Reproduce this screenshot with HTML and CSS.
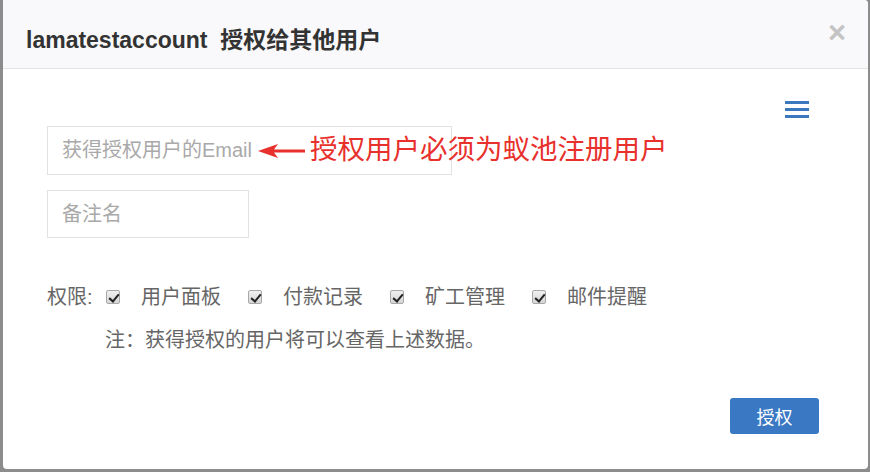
FILE: index.html
```html
<!DOCTYPE html>
<html lang="zh-CN">
<head>
  <meta charset="UTF-8" />
  <meta name="viewport" content="width=device-width, initial-scale=1" />
  <title>授权给其他用户</title>
  <link rel="stylesheet" href="styles.css">
</head>
<body>
  <div class="modal">
    <div class="modal-header">
      <h3 class="modal-title">lamatestaccount&nbsp; 授权给其他用户</h3>
      <span class="close">&times;</span>
    </div>

    <div class="modal-body">
      <div class="toolbar">
        <span class="menu-icon"><i></i><i></i><i></i></span>
      </div>

      <!-- Email + annotation -->
      <div class="email-row">
        <input type="text" class="field field-email" placeholder="获得授权用户的Email" />
        <div class="callout">
          <svg width="48" height="16" viewBox="0 0 48 16">
            <path d="M0 8 L20 1 L16 6.5 L47 6.5 L47 9.5 L16 9.5 L20 15 Z" fill="#e8302c"/>
          </svg>
          <span class="callout-text">授权用户必须为蚁池注册用户</span>
        </div>
      </div>

      <input type="text" class="field field-remark" placeholder="备注名" />

      <div class="perm-row">
        <span class="perm-label">权限:</span>
        <label class="perm"><input type="checkbox" checked /><span>用户面板</span></label>
        <label class="perm"><input type="checkbox" checked /><span>付款记录</span></label>
        <label class="perm"><input type="checkbox" checked /><span>矿工管理</span></label>
        <label class="perm"><input type="checkbox" checked /><span>邮件提醒</span></label>
      </div>
      <p class="note">注：获得授权的用户将可以查看上述数据。</p>
    </div>

    <div class="modal-footer">
      <button class="btn-primary">授权</button>
    </div>
  </div>
</body>
</html>
```

FILE: styles.css
```css
* {
  box-sizing: border-box;
  margin: 0;
  padding: 0;
  font-family: "Liberation Sans", "Noto Sans CJK SC", sans-serif;
}
body {
  background-color: #8c8c8c;
  width: 870px;
  height: 472px;
  overflow: hidden;
}
.modal {
  margin-left: 3px;
  width: 865px;
  height: 469px;
  background: #fff;
  border-radius: 0 4px 4px 4px;
  display: flex;
  flex-direction: column;
}
.modal-header {
  display: flex;
  justify-content: space-between;
  align-items: flex-start;
  height: 69px;
  padding: 0 22px 0 23px;
  background-color: #f9f9fb;
  border-bottom: 1px solid #e4e4e6;
  border-radius: 0 4px 0 0;
}
.modal-title {
  margin-top: 26px;
  font-size: 23px;
  line-height: 28px;
  font-weight: bold;
  color: #333;
}
.close {
  margin-top: 18px;
  font-size: 31px;
  line-height: 30px;
  font-weight: bold;
  color: #c4c4c4;
}
.modal-body {
  flex-grow: 1;
  padding: 32px 59px 0 44px;
  color: #666;
}
.toolbar {
  display: flex;
  justify-content: flex-end;
  height: 17px;
  margin-bottom: 8px;
}
.menu-icon {
  display: flex;
  flex-direction: column;
  justify-content: space-between;
  width: 24px;
  height: 17px;
}
.menu-icon i {
  display: block;
  height: 3px;
  background-color: #3b78c0;
}
.email-row {
  position: relative;
  height: 49px;
}
.field {
  display: block;
  border: 1px solid #e2e2e2;
  padding: 0 14px;
  font-size: 20px;
  color: #555;
  outline: none;
}
.field::placeholder {
  color: #a9a9a9;
}
.field-email {
  width: 405px;
  height: 49px;
}
.field-remark {
  width: 202px;
  height: 48px;
  margin-top: 15px;
}
.callout {
  position: absolute;
  left: 211px;
  top: 0;
  height: 100%;
  display: flex;
  align-items: center;
  gap: 4px;
}
.callout svg {
  display: block;
}
.callout-text {
  font-size: 27.5px;
  line-height: 32px;
  color: #e8302c;
  white-space: nowrap;
  margin-top: -1px;
}
.perm-row {
  display: flex;
  align-items: center;
  margin-top: 47px;
  height: 24px;
  font-size: 20px;
  line-height: 24px;
}
.perm-label {
  width: 59px;
}
.perm {
  display: flex;
  align-items: center;
  margin-right: 27px;
}
.perm input {
  appearance: none;
  -webkit-appearance: none;
  position: relative;
  width: 14px;
  height: 14px;
  margin-right: 21px;
  border: 1px solid #a8a8a8;
  border-radius: 2px;
  background: linear-gradient(#f0f0f0, #d6d6d6);
}
.perm input:checked::after {
  content: "";
  position: absolute;
  left: 4px;
  top: 1px;
  width: 4px;
  height: 8px;
  border: solid #222;
  border-width: 0 2.5px 2.5px 0;
  transform: rotate(40deg);
}
.note {
  margin: 19px 0 0 58px;
  font-size: 20px;
  line-height: 24px;
}
.modal-footer {
  display: flex;
  justify-content: flex-end;
  padding: 0 49px 35px 0;
}
.btn-primary {
  width: 89px;
  height: 36px;
  background-color: #3a78c3;
  color: #fff;
  border: none;
  border-radius: 3px;
  font-size: 18px;
  cursor: pointer;
}
```
